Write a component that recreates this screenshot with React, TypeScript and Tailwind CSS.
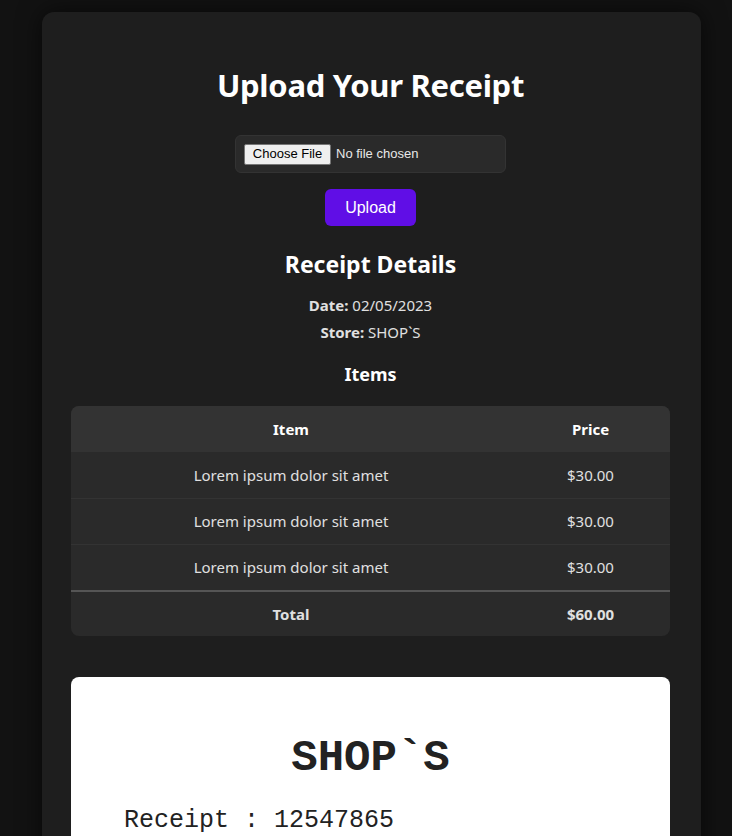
import React from 'react'

const items = [
    { name: 'Lorem ipsum dolor sit amet', price: '$30.00' },
    { name: 'Lorem ipsum dolor sit amet', price: '$30.00' },
    { name: 'Lorem ipsum dolor sit amet', price: '$30.00' },
]

export default function App() {
    return (
        <div className="min-h-screen bg-[#121212] pl-[42px] pr-[31px] pt-3 pb-10 font-['Noto_Sans',sans-serif] text-[#e0e0e0]">
            <div className="rounded-xl bg-[#1e1e1e] pl-[29px] pr-[31px] pt-[53px] pb-10 shadow-[0_0_24px_rgba(0,0,0,0.6)]">
                <h1 className="text-center text-[31px] font-bold leading-[40px] tracking-[-0.3px] text-white">
                    Upload Your Receipt
                </h1>

                <div className="mt-[30px] flex justify-center">
                    <div className="flex h-[38px] w-[271px] items-center gap-[5px] rounded-md border border-[#333] bg-[#2a2a2a] pl-[8px] font-['Liberation_Sans',Arial,sans-serif] text-[13px]">
                        <span className="flex h-[21px] w-[87px] items-center justify-center rounded-[2px] border border-[#767676] bg-[#efefef] text-black">
                            Choose File
                        </span>
                        <span className="text-[#e8e8e8]">No file chosen</span>
                    </div>
                </div>

                <div className="mt-4 flex justify-center">
                    <button className="h-[37px] w-[91px] rounded-md bg-[#600ee6] font-['Liberation_Sans',Arial,sans-serif] text-base text-white">
                        Upload
                    </button>
                </div>

                <h2 className="mt-[23px] text-center text-[23px] font-bold leading-[30px] text-white">Receipt Details</h2>
                <p className="mt-[13px] text-center text-[15px] leading-[27px]">
                    <span className="font-bold">Date:</span> 02/05/2023
                </p>
                <p className="text-center text-[15px] leading-[27px]">
                    <span className="font-bold">Store:</span> SHOP`S
                </p>

                <h3 className="mt-[15px] text-center text-[18px] font-bold leading-[26px] text-white">Items</h3>

                <div className="mt-[19px] overflow-hidden rounded-lg bg-[#2a2a2a] text-[15px]">
                    <div className="flex h-[46px] items-center bg-[#333] font-bold text-white">
                        <div className="w-[440px] text-center">Item</div>
                        <div className="flex-1 text-center">Price</div>
                    </div>
                    {items.map((it, i) => (
                        <div key={i} className={`flex h-[46px] items-center ${i > 0 ? 'border-t border-[#333]' : ''}`}>
                            <div className="w-[440px] text-center">{it.name}</div>
                            <div className="flex-1 text-center">{it.price}</div>
                        </div>
                    ))}
                    <div className="flex h-[46px] items-center border-t-2 border-[#555] font-bold">
                        <div className="w-[440px] text-center">Total</div>
                        <div className="flex-1 text-center">$60.00</div>
                    </div>
                </div>

                <div className="mt-[41px] rounded-lg bg-white px-[53px] pt-[56px] pb-10 font-['Liberation_Mono',monospace] text-[#222]">
                    <div className="text-center text-[44px] font-bold leading-[50px]">SHOP`S</div>
                    <div className="mt-[21px] text-[25px] leading-[34px]">Receipt : 12547865</div>
                    <div className="mt-2 text-[25px] leading-[34px]">Date : 02/05/2023</div>
                </div>
            </div>
        </div>
    )
}
